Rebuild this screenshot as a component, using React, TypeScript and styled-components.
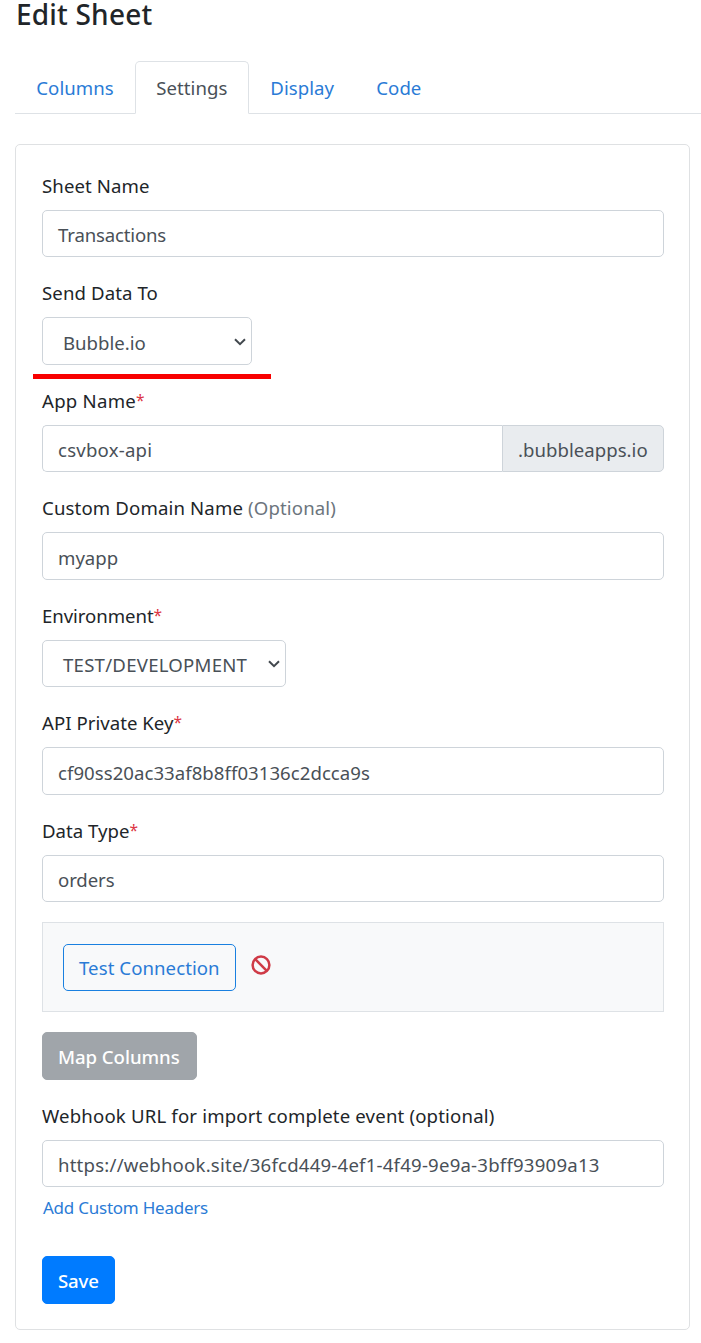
import React from "react";
import styled, { createGlobalStyle } from "styled-components";

const Global = createGlobalStyle`
  * { box-sizing: border-box; }
  html, body { margin: 0; background: #fff; }
  body { font-family: "Noto Sans", "Open Sans", sans-serif; font-size: 18.6px; color: #212529; }
`;

const Page = styled.main`
  height: 1343px;
  padding-left: 15px;
`;

const Title = styled.h1`
  margin: 0;
  height: 61px;
  padding-left: 1px;
  font-size: 28px;
  line-height: 29px;
  font-weight: 500;
  letter-spacing: 0.2px;
`;

const Tabs = styled.nav`
  display: flex;
  height: 53px;
  border-bottom: 1px solid #dee2e6;
`;

const Tab = styled.a<{ $active?: boolean; $w: number }>`
  width: ${p => p.$w}px;
  height: 53px;
  padding-left: 20.3px;
  line-height: 51px;
  white-space: nowrap;
  letter-spacing: 0.04px;
  border: 1px solid transparent;
  border-radius: 5px 5px 0 0;
  color: #2a7bd6;
  ${p => p.$active && "color: #495057; background: #fff; border-color: #dee2e6 #dee2e6 #fff;"}
`;

const Card = styled.form`
  margin-top: 30px;
  width: 675px;
  height: 1186px;
  padding: 24.8px 25px 0 26px;
  border: 1px solid #dfe1e3;
  border-radius: 5px;
`;

const Field = styled.div`
  position: relative;
  height: 107.5px;
`;

const Label = styled.div<{ $ls?: number }>`
  height: 40px;
  line-height: 32px;
  white-space: nowrap;
  letter-spacing: ${p => p.$ls ?? 0.1}px;
`;

const Required = styled.span`
  color: #dc3545;
  font-size: 15.5px;
  line-height: 1;
  vertical-align: 2px;
  letter-spacing: 0;
`;

const Optional = styled.span`
  color: #6c757d;
`;

const Control = styled.div<{ $ls?: number }>`
  display: flex;
  align-items: center;
  height: 47.3px;
  padding: 2.6px 15px 0;
  border: 1px solid #ced4da;
  border-radius: 5px;
  color: #495057;
  white-space: nowrap;
  letter-spacing: ${p => p.$ls ?? 0}px;
`;

const SelectBox = styled(Control)<{ $w: number }>`
  justify-content: space-between;
  width: ${p => p.$w}px;
  padding: 2.6px 4px 0 20px;
`;

const Group = styled.div`
  display: flex;
`;

const GroupInput = styled(Control)`
  flex: 1;
  border-right: 0;
  border-radius: 5px 0 0 5px;
`;

const Suffix = styled(Control)`
  width: 162px;
  background: #e9ecef;
  border-radius: 0 5px 5px 0;
`;

const Underline = styled.div`
  position: absolute;
  left: -9px;
  top: 96.3px;
  width: 238px;
  height: 5px;
  background: #f80000;
`;

const ChevronSvg = styled.svg`
  display: block;
  margin-top: -1px;
`;

const TestPanel = styled.div`
  display: flex;
  gap: 15px;
  height: 89.7px;
  padding: 21px 20px;
  margin-bottom: 20.2px;
  border: 1px solid #dee2e6;
  background: #f8f9fa;
`;

const BanSvg = styled.svg`
  display: block;
  margin-top: 10.3px;
`;

const Button = styled.button<{ $w: number; $bg: string; $fg?: string; $line?: string; $ls?: number }>`
  display: block;
  flex: none;
  width: ${p => p.$w}px;
  height: 47.6px;
  padding: 2px 0 0 15px;
  text-align: left;
  white-space: nowrap;
  font: inherit;
  letter-spacing: ${p => p.$ls ?? 0}px;
  color: ${p => p.$fg ?? "#fff"};
  background: ${p => p.$bg};
  border: 1px solid ${p => p.$line ?? p.$bg};
  border-radius: 5px;
`;

const TestButton = styled(Button)`
  height: 47px;
  padding-top: 0;
`;

const SolidButton = styled(Button)`
  font-weight: 500;
`;

const WebhookField = styled.div`
  margin-top: 20px;
  height: 156.4px;
`;

const HeaderLink = styled.a`
  display: block;
  padding: 8px 0 0 1px;
  font-size: 17px;
  line-height: 26px;
  letter-spacing: -0.24px;
  color: #2a7bd6;
`;

const Chevron = () => (
  <ChevronSvg width="14" height="10" viewBox="0 0 14 10" fill="none">
    <path d="M2 2.3 7 7.2 12 2.3" stroke="#42484e" strokeWidth="2" />
  </ChevronSvg>
);

const Ban = () => (
  <BanSvg width="20" height="20" viewBox="0 0 20 20" fill="none" stroke="#cf3a46" strokeWidth="2.5">
    <circle cx="10" cy="10" r="8.4" />
    <path d="M4.2 4.2 15.8 15.8" />
  </BanSvg>
);

export default function App() {
  return (
    <>
      <Global />
      <Page>
        <Title>Edit Sheet</Title>
        <Tabs>
          <Tab $w={120}>Columns</Tab>
          <Tab $active $w={114}>Settings</Tab>
          <Tab $w={106}>Display</Tab>
          <Tab $w={90}>Code</Tab>
        </Tabs>
        <Card>
          <Field>
            <Label>Sheet Name</Label>
            <Control $ls={-0.17}>Transactions</Control>
          </Field>
          <Field>
            <Label>Send Data To</Label>
            <SelectBox $w={210}>Bubble.io<Chevron /></SelectBox>
            <Underline />
          </Field>
          <Field>
            <Label $ls={0.25}>App Name<Required>*</Required></Label>
            <Group>
              <GroupInput $ls={0.22}>csvbox-api</GroupInput>
              <Suffix $ls={0.03}>.bubbleapps.io</Suffix>
            </Group>
          </Field>
          <Field>
            <Label $ls={0.14}>Custom Domain Name <Optional>(Optional)</Optional></Label>
            <Control>myapp</Control>
          </Field>
          <Field>
            <Label $ls={-0.06}>Environment<Required>*</Required></Label>
            <SelectBox $w={244} $ls={0.24}>TEST/DEVELOPMENT<Chevron /></SelectBox>
          </Field>
          <Field>
            <Label $ls={0.03}>API Private Key<Required>*</Required></Label>
            <Control $ls={0.04}>cf90ss20ac33af8b8ff03136c2dcca9s</Control>
          </Field>
          <Field>
            <Label $ls={0.02}>Data Type<Required>*</Required></Label>
            <Control $ls={-0.1}>orders</Control>
          </Field>
          <TestPanel>
            <TestButton type="button" $w={173} $bg="transparent" $fg="#2a7bd6" $line="#1a80e0" $ls={0.07}>Test Connection</TestButton>
            <Ban />
          </TestPanel>
          <SolidButton type="button" $w={155} $bg="#a0a5aa" $ls={-0.05}>Map Columns</SolidButton>
          <WebhookField>
            <Label $ls={0.17}>Webhook URL for import complete event (optional)</Label>
            <Control $ls={0.21}>https://webhook.site/36fcd449-4ef1-4f49-9e9a-3bff93909a13</Control>
            <HeaderLink>Add Custom Headers</HeaderLink>
          </WebhookField>
          <SolidButton type="button" $w={73} $bg="#007bff" $ls={-0.15}>Save</SolidButton>
        </Card>
      </Page>
    </>
  );
}
